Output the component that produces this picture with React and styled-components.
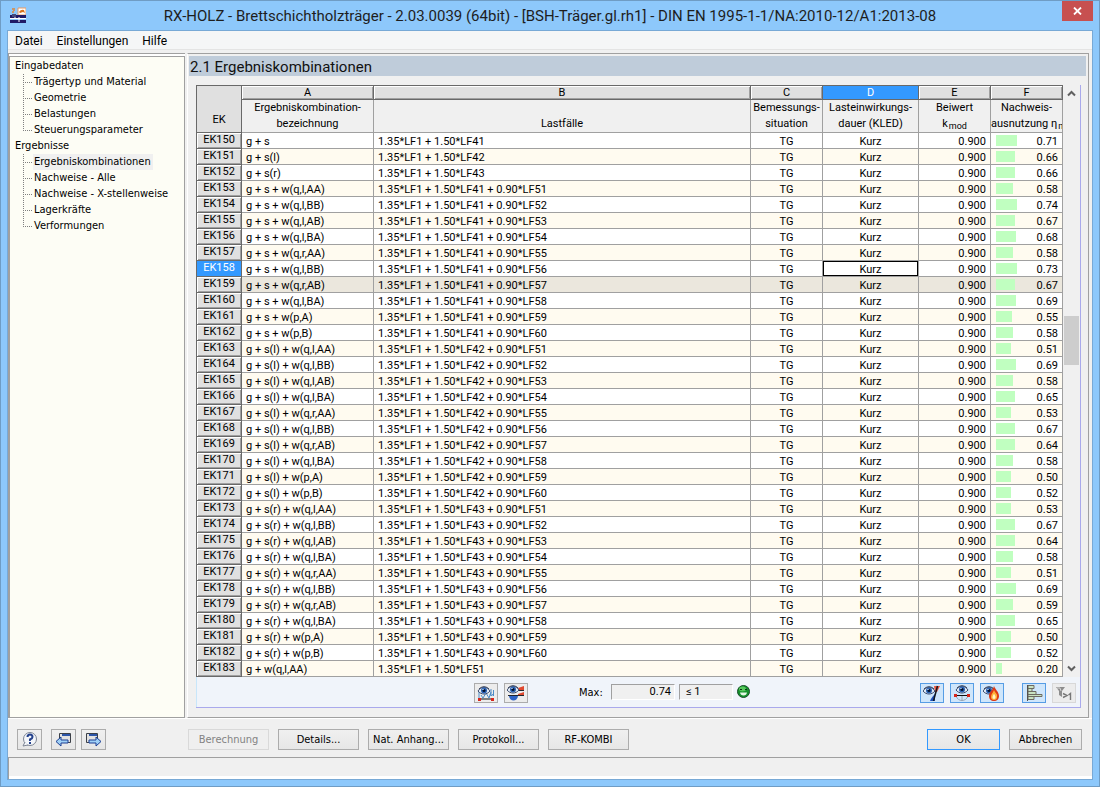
import React from "react";
import styled, { createGlobalStyle, css } from "styled-components";

const UI = 'Roboto, "Open Sans", sans-serif';
const SMALL = '"DejaVu Sans Condensed", "DejaVu Sans", sans-serif';
const GRID = 'Roboto, Arial, sans-serif';

const Global = createGlobalStyle`
  * { box-sizing: border-box; }
  body { margin: 0; font-family: ${SMALL}; font-size: 11px; color: #000; }
  button, input { font: inherit; color: inherit; margin: 0; }
  ul { list-style: none; margin: 0; padding: 0; }
`;

const Window = styled.div`
  min-height: 100vh;
  display: flex;
  flex-direction: column;
  padding: 0 6px 6px;
  background: #8dc8fb;
  border: 1px solid #6f9cc4;
`;

const TitleBar = styled.header`
  display: flex;
  height: 29px;
  padding-left: 3px;
`;

const TitleIcon = styled.span`
  padding-top: 6px;
  height: 23px;
`;

const Title = styled.h1`
  flex: 1;
  margin: 0;
  padding-left: 12px;
  font: 400 15px/30px ${UI};
  text-align: center;
  white-space: nowrap;
  color: #1e1e1e;
`;

const CloseButton = styled.button`
  display: grid;
  place-items: center;
  width: 31px;
  height: 20px;
  padding: 0;
  border: 0;
  background: #c75050;
`;

const Client = styled.div`
  flex: 1;
  display: flex;
  flex-direction: column;
  border: 1px solid #78a9d6;
  background: #f0f0f0;
`;

const MenuBar = styled.nav`
  display: flex;
  gap: 14px;
  height: 19px;
  padding-left: 7px;
  margin-bottom: 3px;
  background: #f5f6f7;
  border-bottom: 1px solid #e4e4e4;
`;

const MenuItem = styled.button`
  padding: 0;
  border: 0;
  background: none;
  font: 12px/20px ${UI};
`;

const Workspace = styled.div`
  flex: 1;
  display: flex;
  gap: 2px;
  padding-right: 3px;
  border-bottom: 1px solid #fff;
`;

const TreeFrame = styled.aside`
  display: flex;
  width: 177px;
  border: 1px solid #a0a0a0;
  border-width: 1px 0 0 1px;
  background: #fff;
  padding: 2px 0 0 0;
`;

const Tree = styled.ul`
  && { padding: 1px 0 0 5px; }
  flex: 1;
  border: 1px solid #a0a0a0;
  background: #fdfdf5;
`;

const TreeGroup = styled.li`
  line-height: 16px;
  white-space: nowrap;
`;

const TreeItem = styled.li`
  display: flex;
  padding-left: 8px;
`;

const dots = "#808080 0 1px, transparent 1px 2px";
const Branch = styled.span`
  width: 9px;
  height: 16px;
  margin-right: 1px;
  background:
    repeating-linear-gradient(to bottom, ${dots}) 0 0 / 1px ${(p) => (p.$last ? "8px" : "16px")} no-repeat,
    repeating-linear-gradient(to right, ${dots}) 0 8px / 9px 1px no-repeat;
`;

const TreeLink = styled.a`
  padding: 0 2px 0 1px;
  color: #000;
  text-decoration: none;
  background: ${(p) => (p.$active ? "#f0f0f0" : "none")};
`;

const Panel = styled.main`
  flex: 1;
  min-width: 0;
  display: flex;
  flex-direction: column;
  padding: 2px 2px 9px 1px;
  border: 1px solid #a0a0a0;
  border-left-color: #fff;
`;

const PanelTitle = styled.h2`
  margin: 0 0 9px;
  padding-left: 1px;
  height: 20px;
  font: 400 15px/22px ${UI};
  color: #111;
  background: #bfccda;
`;

const Frame = styled.section`
  flex: 1;
  display: flex;
  flex-direction: column;
  margin: 0 5px 0 7px;
  border: 1px solid #a9a9ec;
  border-width: 0 1px 1px 0;
  background: #f0f4fa;
`;

const GridArea = styled.div`
  display: flex;
`;

const Table = styled.table`
  flex: 1;
  width: 100%;
  min-width: 0;
  table-layout: fixed;
  border-collapse: separate;
  border-spacing: 0;
  border: 1px solid #696969;
  border-width: 1px 0 0 1px;
  font-family: ${GRID};
  background: #fff;
`;

const Col = styled.col`
  width: ${(p) => (p.$w ? p.$w + "px" : "auto")};
`;

const CornerCell = styled.th`
  padding: 0 0 6px;
  vertical-align: bottom;
  font-weight: 400;
  background: #e0e0e0;
  border: 1px solid #696969;
  border-width: 0 1px 1px 0;
`;

const LetterCell = styled.th`
  height: 14px;
  padding: 0;
  line-height: 12px;
  font-weight: 400;
  border: 1px solid #696969;
  border-width: 0 1px 1px 0;
  ${(p) =>
    p.$active
      ? css`color: #fff; background: #3399ff;`
      : css`background: #e0e0e0; box-shadow: inset 1px 1px #fff, inset -1px -1px #a0a0a0;`}
`;

const NameCell = styled.th`
  height: 33px;
  padding: 0;
  overflow: hidden;
  line-height: 16px;
  font-weight: 400;
  vertical-align: bottom;
  white-space: nowrap;
  background: #f0f0f0;
  border: 1px solid #a0a0a0;
  border-width: 0 1px 1px 0;
  sub { margin-left: 1px; font-size: 9px; line-height: 1px; vertical-align: -2px; }
`;

const Row = styled.tr`
  height: 16px;
  background: ${(p) => (p.$focus ? "#ebe7dd" : p.$odd ? "#fffbf0" : "#fff")};
`;

const RowHead = styled.th`
  height: 16px;
  padding: 0 0 1px;
  line-height: 14px;
  font-weight: 400;
  border: 1px solid #696969;
  border-width: 0 1px 1px 0;
  ${(p) =>
    p.$active
      ? css`color: #fff; background: #3399ff;`
      : css`background: #e0e0e0; box-shadow: inset 1px 1px #fff, inset -1px -1px #a0a0a0;`}
`;

const Cell = styled.td`
  height: 16px;
  padding: 2px 4px 0;
  line-height: 13px;
  white-space: nowrap;
  text-align: ${(p) => p.$align || "left"};
  border: 1px solid #a0a0a0;
  border-width: 0 1px 1px 0;
  ${(p) => p.$selected && css`box-shadow: inset 1px 1px #000, inset -1px -1px #000;`}
`;

const Ratio = styled.div`
  display: flex;
  align-items: flex-start;
  justify-content: space-between;
  padding-left: 1px;
`;

const Bar = styled.span`
  height: 11px;
  background: #c0ffc0;
`;

const ScrollBar = styled.div`
  flex: none;
  display: flex;
  flex-direction: column;
  width: 17px;
  background: #f0f0f0;
`;

const ScrollButton = styled.button`
  display: grid;
  place-items: center;
  height: 17px;
  padding: 0;
  border: 0;
  background: none;
`;

const ScrollSpace = styled.div`
  flex: ${(p) => p.$part};
`;

const Thumb = styled.div`
  flex: 49;
  margin: 0 1px;
  background: #cdcdcd;
`;

const Tools = styled.div`
  flex: 1;
  display: flex;
  align-items: flex-start;
  gap: 6px;
  min-height: 30px;
  padding: 6px 4px 0 277px;
  border-left: 1px solid #c8e6fa;
`;

const ToolButton = styled.button`
  display: grid;
  place-items: center;
  width: 24px;
  height: 20px;
  padding: 0;
  border: 1px solid ${(p) => (p.$on ? "#569de5" : p.$off ? "#d8d8d8" : "#acacac")};
  background: ${(p) => (p.$on ? "#cfe6fb" : "#ececec")};
`;

const MaxLabel = styled.label`
  width: 26px;
  margin-left: 45px;
  line-height: 20px;
`;

const Readout = styled.div`
  display: flex;
  align-items: center;
  gap: 4px;
  height: 17px;
`;

const Field = styled.input`
  width: ${(p) => p.$w}px;
  height: 16px;
  padding: 0 3px 0 6px;
  text-align: ${(p) => p.$align || "left"};
  font-family: ${GRID};
  border: 1px solid #a0a0a0;
  border-color: #a0a0a0 #fff #fff #a0a0a0;
  background: #f0f0f0;
`;

const Group = styled.div`
  display: flex;
  gap: ${(p) => p.$gap}px;
`;

const Spring = styled.span`
  flex: 1;
`;

const Footer = styled.footer`
  display: flex;
  gap: 9px;
  height: 38px;
  padding: 10px 10px 0 9px;
`;

const Actions = styled(Group)`
  flex: 1;
  margin-left: 73px;
`;

const PushButton = styled.button`
  width: ${(p) => p.$w || 81}px;
  height: 21px;
  padding: 0;
  white-space: nowrap;
  border: 1px solid ${(p) => (p.$primary ? "#3399ff" : "#acacac")};
  background: linear-gradient(#f0f0f0, #e6e6e6);
  &:disabled { color: #838383; border-color: #d9d9d9; background: #efefef; }
`;

const IconButton = styled(PushButton)`
  display: grid;
  place-items: center;
  width: 25px;
`;

const StatusBar = styled.div`
  height: 22px;
  padding-bottom: 2px;
  border: 1px solid #a0a0a0;
  border-width: 1px 0 0 1px;
  box-shadow: inset 0 -3px #fff;
`;

const Eye = ({ x = 0, y = 0 }) => (
  <g transform={`translate(${x} ${y})`}>
    <path d="M0 5C3 0 9 0 12 5C9 9 3 9 0 5Z" fill="#dfe9f5" stroke="#3a4a6c" />
    <path d="M1 3C4 0 8 0 11 3" fill="none" stroke="#39435c" />
    <circle cx="6" cy="4.5" r="3" fill="#2a62b4" />
    <circle cx="6" cy="4.5" r="1.5" fill="#03102c" />
    <circle cx="5" cy="3.4" r=".7" fill="#d8ecff" />
  </g>
);

const Icon = ({ w = 18, h = 16, children }) => (
  <svg width={w} height={h} viewBox={`0 0 ${w} ${h}`} aria-hidden="true">{children}</svg>
);

const AppIcon = () => (
  <Icon w={16} h={16}>
    <path d="M8 1h8v7H8z" fill="#fff" stroke="#e89a62" />
    <path d="M9 5q2-3 5-2l1 3-2-1-3 1z" fill="#d9731c" />
    <path d="M2 1h3v3H4v2H2V4h1V3H2z" fill="#c99668" />
    <path d="M0 8h16v3H0zM0 13h16v3H0z" fill="#201a66" />
    <path d="M0 11.500h16M5 7v5M9 10v5" stroke="#fff" />
    <path d="M2 7h4v3H2z" fill="#454a7e" />
  </Icon>
);

const EyeLoads = () => (
  <Icon>
    <path d="M2 6v8M4 10l2 3 3-5 3 5 2-6M14 4v7M16.500 5v6M13 9l1.500 2L16 9" fill="none" stroke="#4c8cc8" />
    <path d="M2 14h14" stroke="#111" />
    <path d="M1 13h3v3H1zM14 13h3v3h-3z" fill="#d8261c" />
    <Eye x={1} y={1} />
  </Icon>
);

const EyeDiagram = () => (
  <Icon>
    <path d="M11 3l6-2v4h-6zM11 9l6-2v4h-6z" fill="#e0492f" />
    <path d="M12 5.500h5M1 10.500h16" stroke="#20242c" />
    <path d="M2 11h9c-1 6-8 6-9 0z" fill="#2c63c8" />
    <Eye x={0} y={0} />
  </Icon>
);

const EyeSection = () => (
  <Icon>
    <path d="M11 1h6l-3 6h-2z" fill="#e8553f" />
    <path d="M12 9v7H7c1-3 3-5 5-7z" fill="#1e4fb8" />
    <path d="M14.500 1L10.500 16" stroke="#101820" strokeWidth="1.500" />
    <Eye x={0} y={1} />
  </Icon>
);

const EyeBeam = () => (
  <Icon>
    <path d="M3 11c2 6 10 6 12 0M9 10v6" fill="none" stroke="#9aa6b4" />
    <path d="M2 10.500h14" stroke="#111" />
    <path d="M1 9h3v3H1zM14 9h3v3h-3z" fill="#d8261c" />
    <Eye x={3} y={0} />
  </Icon>
);

const EyeFire = () => (
  <Icon>
    <Eye x={0} y={1} />
    <path d="M11 1c1 3 5 6 5 10 0 3-2 5-5 5s-5-2-5-5c0-4 4-6 5-10z" fill="#dd3a16" />
    <path d="M11 5c1 3 4 4 3 7 0 2-1 3-3 3s-3-1-3-3c0-3 2-4 3-7z" fill="#ffb13a" />
    <path d="M11 9c2 2 2 5 0 5s-2-3 0-5z" fill="#fff7c8" />
  </Icon>
);

const Bars = () => (
  <Icon>
    <path d="M3 .5h6v3H3zM3 3.500h4v3H3zM3 6.500h8v3H3zM3 9.500h14v2H3zM3 11.500h6v3H3z" fill="#c9e3c2" stroke="#6d6a62" />
    <path d="M2.500 0v16" stroke="#55524c" />
  </Icon>
);

const FilterIcon = () => (
  <Icon>
    <path d="M1 2h9L7 6v6L4 10V6z" fill="#8d8d8d" />
    <path d="M2 3h3l1 3" fill="none" stroke="#d4d4d4" />
    <path d="M8 8.500l4 2L8 12.500M13.500 10l2-1.500V15" fill="none" stroke="#777" strokeWidth="1.400" />
  </Icon>
);

const Smiley = () => (
  <Icon w={13} h={13}>
    <circle cx="6.500" cy="6.500" r="6" fill="#14922c" stroke="#1b4d2a" />
    <ellipse cx="5.500" cy="4" rx="3.500" ry="2.500" fill="#57c95c" />
    <path d="M3 4h2v1H3zM8 4h2v1H8z" fill="#0c3315" />
    <path d="M3 7.500h7q-.5 3-3.500 3T3 7.500z" fill="#e4f8e4" />
  </Icon>
);

const HelpIcon = () => (
  <Icon w={17} h={17}>
    <circle cx="9" cy="8" r="6.500" fill="#f4f6fa" stroke="#7d8594" />
    <path d="M4 11l-2 4 5-1" fill="#f4f6fa" stroke="#7d8594" />
    <path d="M6.500 6q0-2.500 2.500-2.500T11.500 6Q11.500 7.500 9 8.500V10" fill="none" stroke="#24418c" strokeWidth="2" />
    <path d="M8 11h2v2H8z" fill="#24418c" />
  </Icon>
);

const WindowArrow = ({ forward }) => (
  <Icon w={17} h={17}>
    <path d={forward ? "M1.500 2.500h11v9h-11z" : "M4.500 2.500h11v9h-11z"} fill="#e2e2e2" stroke="#3c4048" />
    <path d={forward ? "M4 3h8v2H4z" : "M7 3h8v2H7z"} fill="#2c55a8" />
    <path
      d="M1 10.500L6 6v3h7v3H6v3z"
      transform={forward ? "matrix(-1 0 0 1 17 0)" : undefined}
      fill="#9fd0f6"
      stroke="#1c3f94"
    />
  </Icon>
);

const Chevron = ({ down }) => (
  <Icon w={9} h={7}>
    <path d={down ? "M1 1.500L4.500 5 8 1.500" : "M1 5.500L4.500 2 8 5.500"} fill="none" stroke="#606060" strokeWidth="2" />
  </Icon>
);

const tree = [
  ["Eingabedaten", ["Trägertyp und Material", "Geometrie", "Belastungen", "Steuerungsparameter"]],
  ["Ergebnisse", ["Ergebniskombinationen", "Nachweise - Alle", "Nachweise - X-stellenweise", "Lagerkräfte", "Verformungen"]],
];

const winds = ["q,l,AA", "q,l,BB", "q,l,AB", "q,l,BA", "q,r,AA", "q,l,BB", "q,r,AB", "q,l,BA", "p,A", "p,B"];
const snows = [["s", 41], ["s(l)", 42], ["s(r)", 43]];
const ratios = [
  0.71, 0.66, 0.66, 0.58, 0.74, 0.67, 0.68, 0.58, 0.73, 0.67, 0.69, 0.55, 0.58, 0.51, 0.69, 0.58, 0.65,
  0.53, 0.67, 0.64, 0.58, 0.5, 0.52, 0.53, 0.67, 0.64, 0.58, 0.51, 0.69, 0.59, 0.65, 0.5, 0.52, 0.2,
];

const combinations = [
  ...snows.map(([s, lf]) => [`g + ${s}`, `1.35*LF1 + 1.50*LF${lf}`]),
  ...snows.flatMap(([s, lf]) =>
    winds.map((w, i) => [`g + ${s} + w(${w})`, `1.35*LF1 + 1.50*LF${lf} + 0.90*LF${51 + i}`])
  ),
  ["g + w(q,l,AA)", "1.35*LF1 + 1.50*LF51"],
].map(([name, cases], i) => ({ id: 150 + i, name, cases, ratio: ratios[i] }));

export default function App() {
  return (
    <Window>
      <Global />
      <TitleBar>
        <TitleIcon><AppIcon /></TitleIcon>
        <Title>RX-HOLZ - Brettschichtholzträger - 2.03.0039 (64bit) - [BSH-Träger.gl.rh1] - DIN EN 1995-1-1/NA:2010-12/A1:2013-08</Title>
        <CloseButton aria-label="Schließen">
          <Icon w={9} h={8}><path d="M1 .5l7 7M8 .5l-7 7" stroke="#fff" strokeWidth="1.800" /></Icon>
        </CloseButton>
      </TitleBar>
      <Client>
        <MenuBar>
          {["Datei", "Einstellungen", "Hilfe"].map((m) => <MenuItem key={m}>{m}</MenuItem>)}
        </MenuBar>
        <Workspace>
          <TreeFrame>
            <Tree>
              {tree.map(([group, items]) => (
                <TreeGroup key={group}>
                  {group}
                  <ul>
                    {items.map((item, i) => (
                      <TreeItem key={item}>
                        <Branch $last={i === items.length - 1} />
                        <TreeLink href="#" $active={item === "Ergebniskombinationen"}>{item}</TreeLink>
                      </TreeItem>
                    ))}
                  </ul>
                </TreeGroup>
              ))}
            </Tree>
          </TreeFrame>
          <Panel>
            <PanelTitle>2.1 Ergebniskombinationen</PanelTitle>
            <Frame>
              <GridArea>
                <Table>
                  <colgroup>
                    {[45, 132, 0, 72, 96, 72, 72].map((w, i) => <Col key={i} $w={w} />)}
                  </colgroup>
                  <thead>
                    <tr>
                      <CornerCell rowSpan={2}>EK</CornerCell>
                      {[..."ABCDEF"].map((l) => <LetterCell key={l} $active={l === "D"}>{l}</LetterCell>)}
                    </tr>
                    <tr>
                      <NameCell>Ergebniskombination-<br />bezeichnung</NameCell>
                      <NameCell>Lastfälle</NameCell>
                      <NameCell>Bemessungs-<br />situation</NameCell>
                      <NameCell>Lasteinwirkungs-<br />dauer (KLED)</NameCell>
                      <NameCell>Beiwert<br />k<sub>mod</sub></NameCell>
                      <NameCell>Nachweis-<br />ausnutzung η<sub>m</sub></NameCell>
                    </tr>
                  </thead>
                  <tbody>
                    {combinations.map(({ id, name, cases, ratio }) => (
                      <Row key={id} $odd={id % 2 === 1} $focus={id === 159}>
                        <RowHead $active={id === 158}>EK{id}</RowHead>
                        <Cell>{name}</Cell>
                        <Cell>{cases}</Cell>
                        <Cell $align="center">TG</Cell>
                        <Cell $align="center" $selected={id === 158}>Kurz</Cell>
                        <Cell $align="right">0.900</Cell>
                        <Cell>
                          <Ratio>
                            <Bar style={{ width: Math.round(ratio * 29) }} />
                            {ratio.toFixed(2)}
                          </Ratio>
                        </Cell>
                      </Row>
                    ))}
                  </tbody>
                </Table>
                <ScrollBar>
                  <ScrollButton aria-label="Nach oben"><Chevron /></ScrollButton>
                  <ScrollSpace $part={214} />
                  <Thumb />
                  <ScrollSpace $part={294} />
                  <ScrollButton aria-label="Nach unten"><Chevron down /></ScrollButton>
                </ScrollBar>
              </GridArea>
              <Tools>
                <ToolButton aria-label="Lasten anzeigen"><EyeLoads /></ToolButton>
                <ToolButton aria-label="Verläufe anzeigen"><EyeDiagram /></ToolButton>
                <MaxLabel htmlFor="max">Max:</MaxLabel>
                <Readout>
                  <Field id="max" $w={64} $align="right" readOnly value="0.74" />
                  <Field aria-label="Grenzwert" $w={54} readOnly value="≤ 1" />
                  <Smiley />
                </Readout>
                <Spring />
                <Group $gap={18}>
                  <Group $gap={6}>
                    <ToolButton $on aria-label="Querschnitt"><EyeSection /></ToolButton>
                    <ToolButton $on aria-label="Träger"><EyeBeam /></ToolButton>
                    <ToolButton $on aria-label="Brandschutz"><EyeFire /></ToolButton>
                  </Group>
                  <Group $gap={6}>
                    <ToolButton $on aria-label="Balken"><Bars /></ToolButton>
                    <ToolButton $off aria-label="Filter"><FilterIcon /></ToolButton>
                  </Group>
                </Group>
              </Tools>
            </Frame>
          </Panel>
        </Workspace>
        <Footer>
          <IconButton aria-label="Hilfe"><HelpIcon /></IconButton>
          <Group $gap={5}>
            <IconButton aria-label="Zurück"><WindowArrow /></IconButton>
            <IconButton aria-label="Weiter"><WindowArrow forward /></IconButton>
          </Group>
          <Actions $gap={9}>
            <PushButton disabled>Berechnung</PushButton>
            <PushButton>Details...</PushButton>
            <PushButton>Nat. Anhang...</PushButton>
            <PushButton>Protokoll...</PushButton>
            <PushButton>RF-KOMBI</PushButton>
          </Actions>
          <PushButton $w={73} $primary>OK</PushButton>
          <PushButton $w={73}>Abbrechen</PushButton>
        </Footer>
        <StatusBar />
      </Client>
    </Window>
  );
}
